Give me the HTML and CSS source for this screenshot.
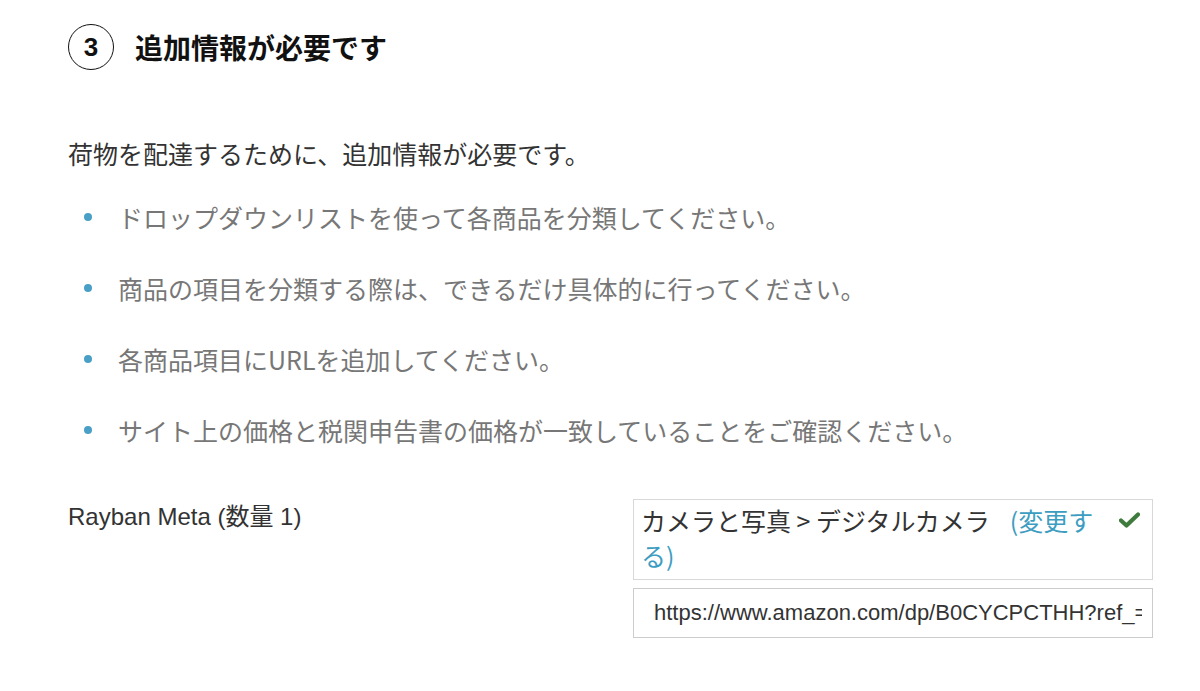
FILE: index.html
```html
<!DOCTYPE html>
<html lang="ja">
<head>
<meta charset="utf-8">
<link rel="stylesheet" href="styles.css">
</head>
<body>
<div class="page">
  <div class="step-head">
    <div class="step-num">3</div>
    <h2 class="step-title">追加情報が必要です</h2>
  </div>
  <p class="intro">荷物を配達するために、追加情報が必要です。</p>
  <ul class="tips">
    <li>ドロップダウンリストを使って各商品を分類してください。</li>
    <li>商品の項目を分類する際は、できるだけ具体的に行ってください。</li>
    <li>各商品項目にURLを追加してください。</li>
    <li>サイト上の価格と税関申告書の価格が一致していることをご確認ください。</li>
  </ul>
  <div class="item-row">
    <div class="item-label">Rayban Meta (数量 1)</div>
    <div class="item-fields">
      <div class="category-box">
        <div class="category-text">カメラと写真 &gt; デジタルカメラ<a class="change-link" href="#">(変更する)</a></div>
        <svg class="check" width="21" height="16" viewBox="0 0 21 16"><path d="M2 8.5 L7.5 13.5 L19 2.5" fill="none" stroke="#3f7b3d" stroke-width="4.2" stroke-linecap="round" stroke-linejoin="round"/></svg>
      </div>
      <input class="url-input" type="text" value="https://www.amazon.com/dp/B0CYCPCTHH?ref_=ppx_yo2ov_dt_b_fed_asin_title" readonly>
    </div>
  </div>
</div>
</body>
</html>
```
FILE: styles.css
```css
html, body {
  margin: 0;
  padding: 0;
  background: #ffffff;
}
body {
  font-family: "Liberation Sans", "Noto Sans CJK JP", sans-serif;
  color: #333333;
}
.page {
  padding: 24px 47px 0 68px;
}
.step-head {
  display: flex;
  align-items: center;
  gap: 21px;
  height: 46px;
}
.step-num {
  box-sizing: border-box;
  width: 46px;
  height: 46px;
  border: 1.6px solid #111111;
  border-radius: 50%;
  display: flex;
  align-items: center;
  justify-content: center;
  font-family: "Liberation Sans", sans-serif;
  font-weight: bold;
  font-size: 26px;
  color: #111111;
}
.step-title {
  margin: 0;
  font-family: "Noto Sans CJK JP", sans-serif;
  font-weight: bold;
  font-size: 28px;
  color: #111111;
  line-height: 46px;
}
.intro {
  margin: 66px 0 0 0;
  font-family: "Noto Sans CJK JP", sans-serif;
  font-size: 25px;
  line-height: 34px;
  color: #333333;
}
.tips {
  list-style: none;
  margin: 30px 0 0 0;
  padding: 0;
}
.tips li {
  position: relative;
  padding-left: 50px;
  font-family: "Noto Sans CJK JP", sans-serif;
  font-size: 25px;
  line-height: 34px;
  color: #777777;
  margin-bottom: 37px;
}
.tips li:last-child {
  margin-bottom: 0;
}
.tips li::before {
  content: "";
  position: absolute;
  left: 16px;
  top: 13px;
  width: 8px;
  height: 8px;
  border-radius: 50%;
  background: #4a9fc6;
}
.item-row {
  display: grid;
  grid-template-columns: 1fr 520px;
  margin-top: 52px;
}
.item-label {
  padding-top: 1px;
  font-size: 24px;
  line-height: 34px;
  color: #333333;
}
.item-fields {
  display: flex;
  flex-direction: column;
  gap: 8px;
}
.category-box {
  box-sizing: border-box;
  height: 81px;
  border: 1px solid #d8d8d8;
  display: flex;
  align-items: flex-start;
  gap: 16px;
  padding: 3px 12px 0 7px;
}
.category-text {
  flex: 1;
  font-family: "Noto Sans CJK JP", sans-serif;
  font-size: 25px;
  line-height: 35px;
  color: #333333;
}
.change-link {
  margin-left: 20px;
  color: #3d9dc1;
  text-decoration: none;
}
.check {
  margin-top: 9px;
  flex: none;
}
.url-input {
  box-sizing: border-box;
  width: 520px;
  height: 50px;
  margin: 0;
  border: 1px solid #cccccc;
  padding: 0 10px 0 20px;
  font-family: "Liberation Sans", sans-serif;
  font-size: 22px;
  color: #333333;
  background: #ffffff;
  outline: none;
}
```
